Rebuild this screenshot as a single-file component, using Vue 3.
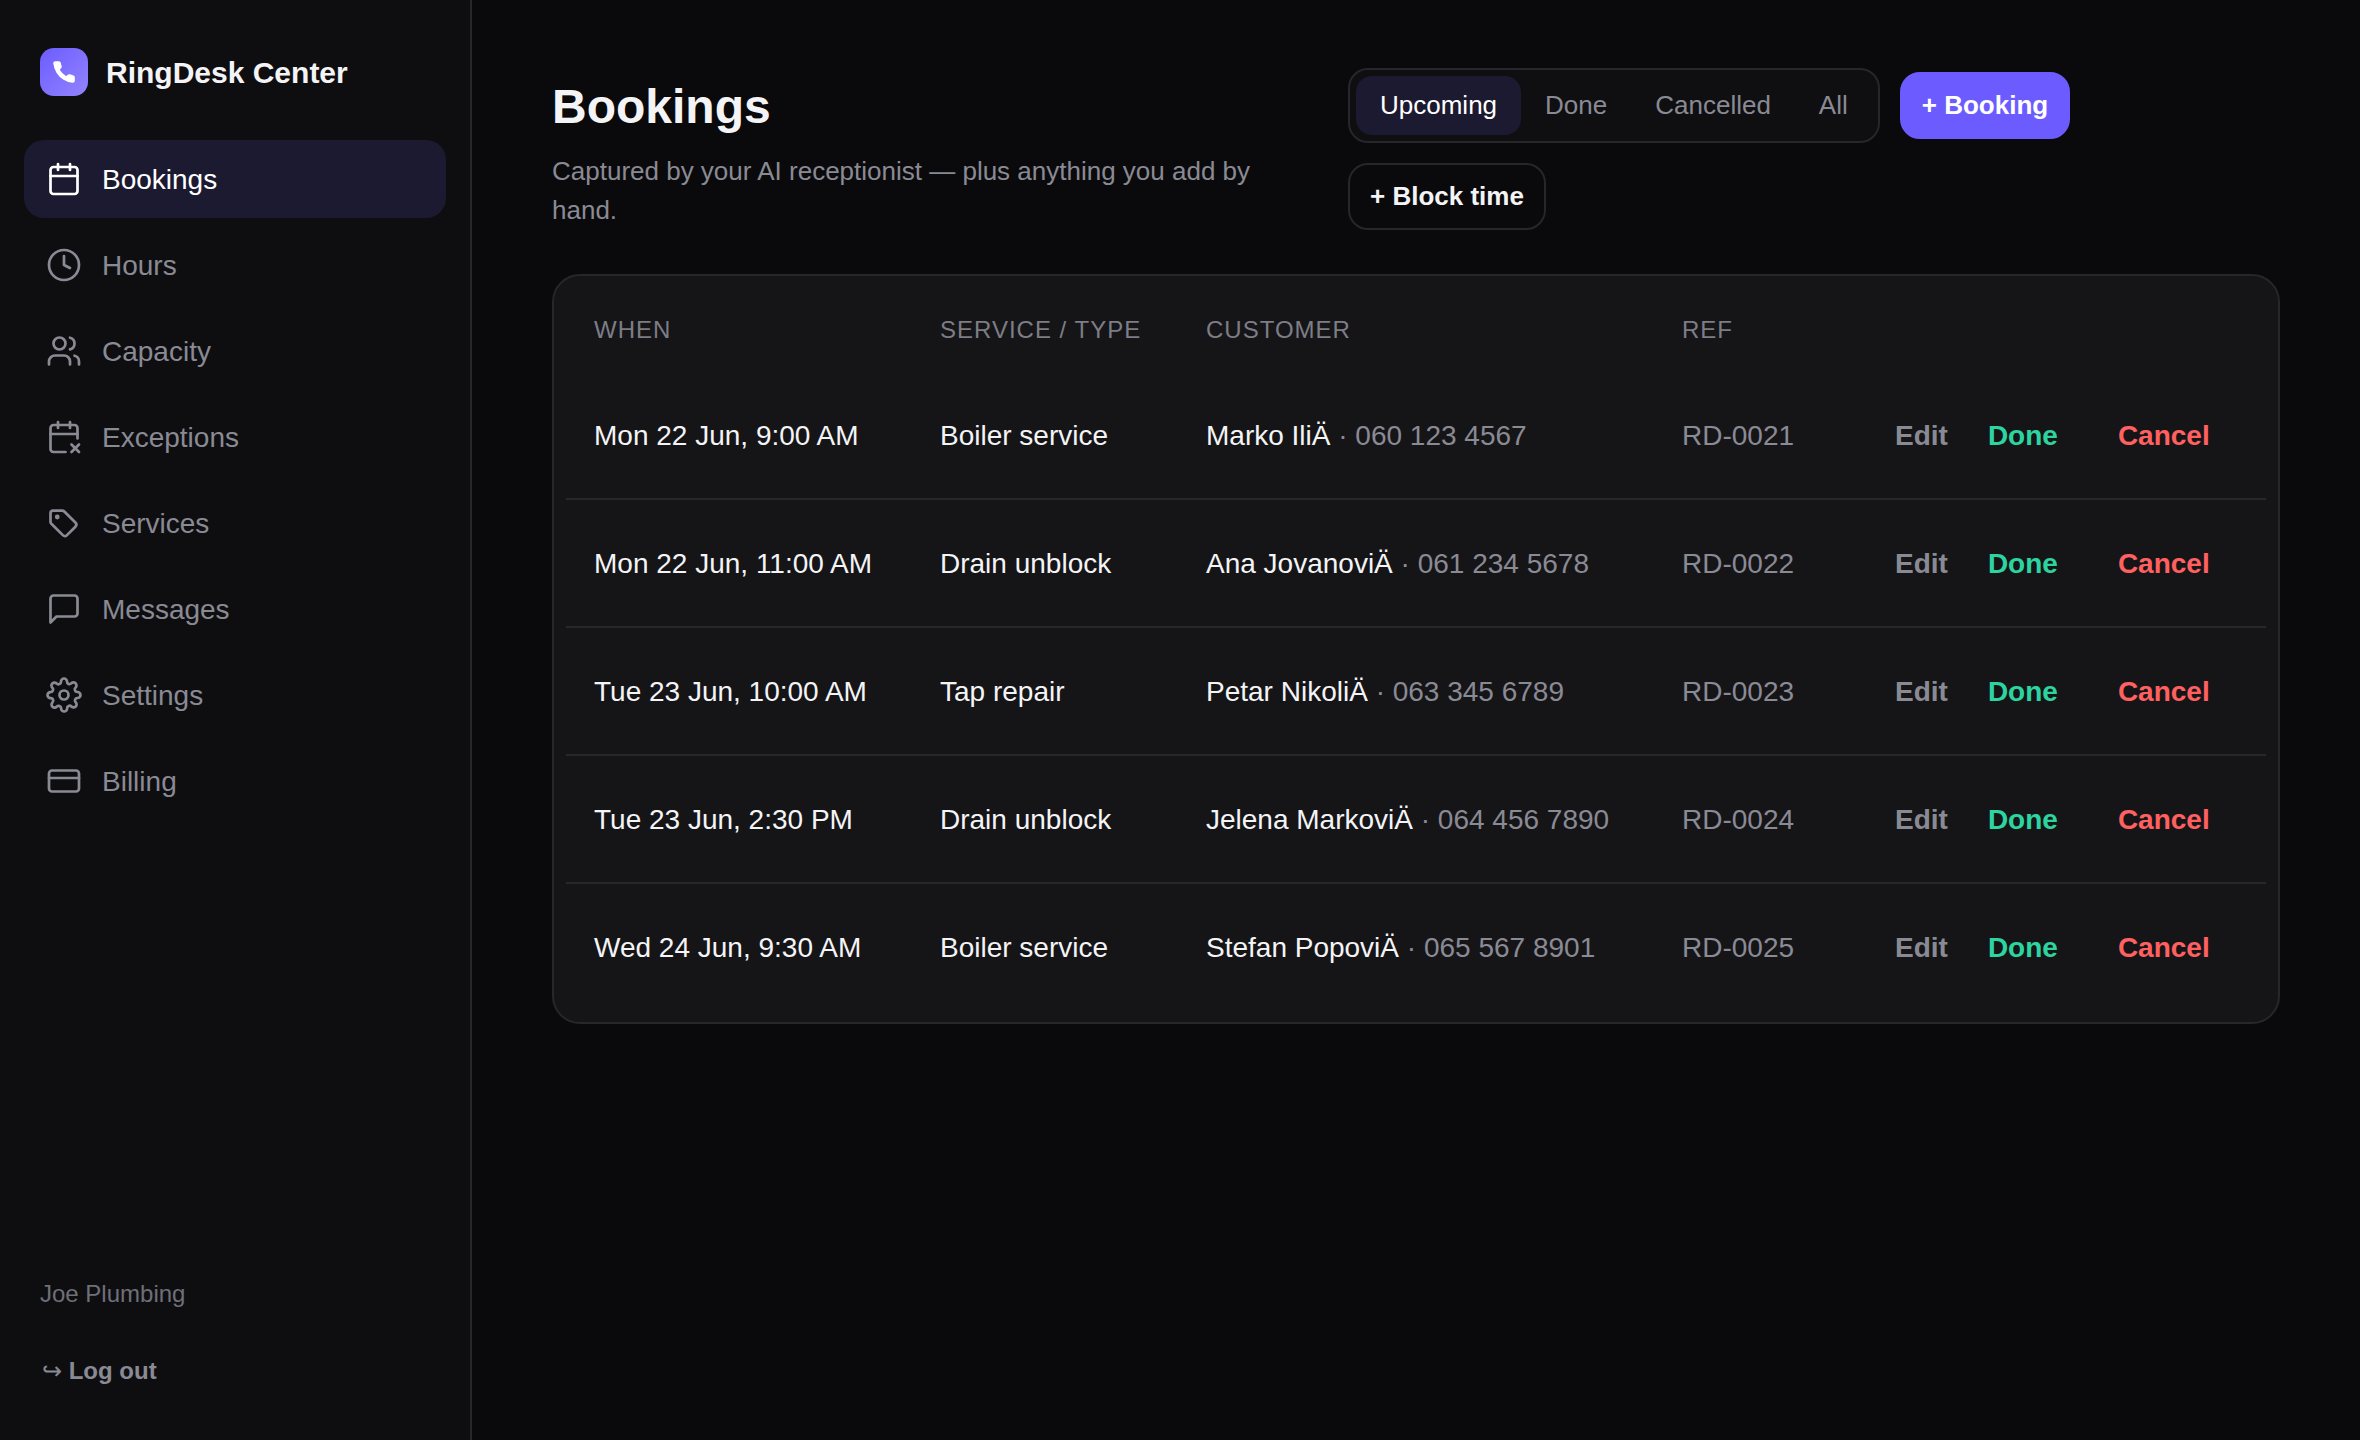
<script setup>
const navItems = [
  { label: 'Bookings', icon: 'calendar', active: true },
  { label: 'Hours', icon: 'clock' },
  { label: 'Capacity', icon: 'users' },
  { label: 'Exceptions', icon: 'calendar-x' },
  { label: 'Services', icon: 'tag' },
  { label: 'Messages', icon: 'message' },
  { label: 'Settings', icon: 'settings' },
  { label: 'Billing', icon: 'card' },
]

const tabs = ['Upcoming', 'Done', 'Cancelled', 'All']

const bookings = [
  { when: 'Mon 22 Jun, 9:00 AM', service: 'Boiler service', name: 'Marko IliÄ', phone: '060 123 4567', ref: 'RD-0021' },
  { when: 'Mon 22 Jun, 11:00 AM', service: 'Drain unblock', name: 'Ana JovanoviÄ', phone: '061 234 5678', ref: 'RD-0022' },
  { when: 'Tue 23 Jun, 10:00 AM', service: 'Tap repair', name: 'Petar NikoliÄ', phone: '063 345 6789', ref: 'RD-0023' },
  { when: 'Tue 23 Jun, 2:30 PM', service: 'Drain unblock', name: 'Jelena MarkoviÄ', phone: '064 456 7890', ref: 'RD-0024' },
  { when: 'Wed 24 Jun, 9:30 AM', service: 'Boiler service', name: 'Stefan PopoviÄ', phone: '065 567 8901', ref: 'RD-0025' },
]
</script>

<template>
  <div class="shell">
    <aside class="sidebar">
      <div class="brand">
        <span class="brand-mark">
          <svg width="26" height="26" viewBox="0 0 24 24" fill="#fff">
            <path d="M22 16.92v3a2 2 0 0 1-2.18 2 19.79 19.79 0 0 1-8.63-3.07 19.5 19.5 0 0 1-6-6 19.79 19.79 0 0 1-3.07-8.67A2 2 0 0 1 4.11 2h3a2 2 0 0 1 2 1.72 12.84 12.84 0 0 0 .7 2.81 2 2 0 0 1-.45 2.11L8.09 9.91a16 16 0 0 0 6 6l1.27-1.27a2 2 0 0 1 2.11-.45 12.84 12.84 0 0 0 2.81.7A2 2 0 0 1 22 16.92z" />
          </svg>
        </span>
        <span class="brand-name">RingDesk Center</span>
      </div>

      <nav class="nav">
        <a
          v-for="item in navItems"
          :key="item.label"
          class="nav-item"
          :class="{ active: item.active }"
        >
          <svg class="nav-icon" width="36" height="36" viewBox="0 0 24 24" fill="none" stroke="currentColor" stroke-width="1.8" stroke-linecap="round" stroke-linejoin="round">
            <template v-if="item.icon === 'calendar'">
              <path d="M8 2v4" />
              <path d="M16 2v4" />
              <rect x="3" y="4" width="18" height="18" rx="2" />
              <path d="M3 10h18" />
            </template>
            <template v-else-if="item.icon === 'clock'">
              <circle cx="12" cy="12" r="10" />
              <polyline points="12 6 12 12 16 14" />
            </template>
            <template v-else-if="item.icon === 'users'">
              <path d="M16 21v-2a4 4 0 0 0-4-4H6a4 4 0 0 0-4 4v2" />
              <circle cx="9" cy="7" r="4" />
              <path d="M22 21v-2a4 4 0 0 0-3-3.87" />
              <path d="M16 3.13a4 4 0 0 1 0 7.75" />
            </template>
            <template v-else-if="item.icon === 'calendar-x'">
              <path d="M8 2v4" />
              <path d="M16 2v4" />
              <path d="M21 13V6a2 2 0 0 0-2-2H5a2 2 0 0 0-2 2v14a2 2 0 0 0 2 2h8" />
              <path d="M3 10h18" />
              <path d="m17 17 5 5" />
              <path d="m22 17-5 5" />
            </template>
            <template v-else-if="item.icon === 'tag'">
              <path d="M3 5.5a1.8 1.8 0 0 1 1.8-1.8h6a2 2 0 0 1 1.4.6l7.4 7.4a2 2 0 0 1 0 2.8l-5.6 5.6a2 2 0 0 1-2.8 0l-7.6-7.6a2 2 0 0 1-.6-1.4z" />
              <circle cx="7.5" cy="8" r=".7" fill="currentColor" />
            </template>
            <template v-else-if="item.icon === 'message'">
              <path d="M21 15a2 2 0 0 1-2 2H7l-4 4V5a2 2 0 0 1 2-2h14a2 2 0 0 1 2 2z" />
            </template>
            <template v-else-if="item.icon === 'settings'">
              <circle cx="12" cy="12" r="3" />
              <path d="M19.4 15a1.65 1.65 0 0 0 .33 1.82l.06.06a2 2 0 0 1 0 2.83 2 2 0 0 1-2.83 0l-.06-.06a1.65 1.65 0 0 0-1.82-.33 1.65 1.65 0 0 0-1 1.51V21a2 2 0 0 1-2 2 2 2 0 0 1-2-2v-.09A1.65 1.65 0 0 0 9 19.4a1.65 1.65 0 0 0-1.82.33l-.06.06a2 2 0 0 1-2.83 0 2 2 0 0 1 0-2.83l.06-.06a1.65 1.65 0 0 0 .33-1.82 1.65 1.65 0 0 0-1.51-1H3a2 2 0 0 1-2-2 2 2 0 0 1 2-2h.09A1.65 1.65 0 0 0 4.6 9a1.65 1.65 0 0 0-.33-1.82l-.06-.06a2 2 0 0 1 0-2.83 2 2 0 0 1 2.83 0l.06.06a1.65 1.65 0 0 0 1.82.33H9a1.65 1.65 0 0 0 1-1.51V3a2 2 0 0 1 2-2 2 2 0 0 1 2 2v.09a1.65 1.65 0 0 0 1 1.51 1.65 1.65 0 0 0 1.82-.33l.06-.06a2 2 0 0 1 2.83 0 2 2 0 0 1 0 2.83l-.06.06a1.65 1.65 0 0 0-.33 1.82V9a1.65 1.65 0 0 0 1.51 1H21a2 2 0 0 1 2 2 2 2 0 0 1-2 2h-.09a1.65 1.65 0 0 0-1.51 1z" />
            </template>
            <template v-else>
              <rect x="2" y="5" width="20" height="14" rx="2" />
              <path d="M2 10h20" />
            </template>
          </svg>
          <span class="nav-label">{{ item.label }}</span>
        </a>
      </nav>

      <div class="side-foot">
        <div class="account">Joe Plumbing</div>
        <button class="logout"><span class="logout-arrow">↪</span> Log out</button>
      </div>
    </aside>

    <main class="main">
      <header class="page-head">
        <div class="page-title">
          <h1>Bookings</h1>
          <p>Captured by your AI receptionist — plus anything you add by hand.</p>
        </div>
        <div class="controls">
          <div class="tabs">
            <button
              v-for="(tab, i) in tabs"
              :key="tab"
              class="tab"
              :class="{ active: i === 0 }"
            >{{ tab }}</button>
          </div>
          <button class="btn primary">+ Booking</button>
          <button class="btn ghost">+ Block time</button>
        </div>
      </header>

      <section class="card">
        <table class="table">
          <colgroup>
            <col style="width: 346px" />
            <col style="width: 266px" />
            <col style="width: 476px" />
            <col style="width: 213px" />
            <col style="width: 399px" />
          </colgroup>
          <thead>
            <tr>
              <th>When</th>
              <th>Service / Type</th>
              <th>Customer</th>
              <th>Ref</th>
              <th></th>
            </tr>
          </thead>
          <tbody>
            <tr v-for="b in bookings" :key="b.ref">
              <td>{{ b.when }}</td>
              <td>{{ b.service }}</td>
              <td>{{ b.name }} <span class="muted">· {{ b.phone }}</span></td>
              <td class="muted">{{ b.ref }}</td>
              <td>
                <div class="actions">
                  <button class="act edit">Edit</button>
                  <button class="act done">Done</button>
                  <button class="act cancel">Cancel</button>
                </div>
              </td>
            </tr>
          </tbody>
        </table>
      </section>
    </main>
  </div>
</template>

<style scoped>
.shell {
  display: flex;
  min-height: 1440px;
  color: #f4f4f6;
  font-family: "Liberation Sans", Arial, sans-serif;
  font-size: 28px;
  line-height: 1.5;
}

button {
  font-family: inherit;
  cursor: pointer;
}

/* sidebar */
.sidebar {
  box-sizing: border-box;
  width: 472px;
  flex: none;
  display: flex;
  flex-direction: column;
  padding: 48px 24px 47px;
  background: #0e0e11;
  border-right: 2px solid #26262b;
}

.brand {
  display: flex;
  align-items: center;
  gap: 18px;
  padding-left: 16px;
  margin-bottom: 44px;
}

.brand-mark {
  width: 48px;
  height: 48px;
  border-radius: 14px;
  display: flex;
  align-items: center;
  justify-content: center;
  background: linear-gradient(135deg, #6c5cff, #9384ff);
}

.brand-name {
  font-size: 30px;
  font-weight: 700;
}

.nav {
  display: flex;
  flex-direction: column;
  gap: 8px;
}

.nav-item {
  display: flex;
  align-items: center;
  gap: 20px;
  padding: 18px 22px;
  border-radius: 20px;
  color: #8a8a94;
}

.nav-item.active {
  background: #1c1a30;
  color: #fff;
}

.nav-icon {
  flex: none;
  margin: -4px 0;
}

.nav-label {
  padding-top: 1px;
  margin-bottom: -1px;
}

.side-foot {
  margin-top: auto;
  padding-left: 16px;
  font-size: 24px;
}

.account {
  color: #6f6f78;
}

.logout {
  display: block;
  margin-top: 37px;
  padding: 4px 0 4px 2px;
  background: none;
  border: 0;
  color: #8a8a94;
  font-size: 24px;
  font-weight: 700;
  line-height: 36px;
}

.logout-arrow {
  font-weight: 400;
}

/* main */
.main {
  flex: 1;
  min-width: 0;
  box-sizing: border-box;
  padding: 68px 80px 0;
  background: #0a0a0c;
}

.page-head {
  display: flex;
  gap: 48px;
  margin-bottom: 44px;
}

.page-title {
  width: 748px;
  flex: none;
}

.page-title h1 {
  margin: 0 0 6px;
  font-size: 48px;
  font-weight: 700;
  line-height: 78px;
}

.page-title p {
  margin: 0;
  color: #8a8a94;
  font-size: 26px;
  line-height: 39px;
}

.controls {
  flex: 1;
  display: flex;
  flex-wrap: wrap;
  align-items: center;
  align-content: flex-start;
  gap: 20px;
}

.tabs {
  display: flex;
  padding: 6px;
  background: #0f0f12;
  border: 2px solid #26262b;
  border-radius: 20px;
}

.tab {
  padding: 10px 24px;
  background: none;
  border: 0;
  border-radius: 16px;
  color: #8a8a94;
  font-size: 26px;
  line-height: 39px;
}

.tab.active {
  background: #1c1a30;
  color: #fff;
}

.btn {
  padding: 12px 20px;
  border-radius: 20px;
  font-size: 26px;
  font-weight: 700;
  line-height: 39px;
}

.btn.primary {
  background: #6c5cff;
  border: 2px solid #6c5cff;
  color: #fff;
}

.btn.ghost {
  background: transparent;
  border: 2px solid #26262b;
  color: #f4f4f6;
}

.card {
  padding: 12px;
  background: #151518;
  border: 2px solid #26262b;
  border-radius: 28px;
}

.table {
  width: 100%;
  table-layout: fixed;
  border-collapse: collapse;
}

.table th {
  height: 84px;
  padding: 0 28px;
  box-sizing: border-box;
  color: #7d7d86;
  font-size: 24px;
  font-weight: 400;
  letter-spacing: 1px;
  text-align: left;
  text-transform: uppercase;
}

.table td {
  height: 124px;
  padding: 2px 28px 0;
  white-space: nowrap;
}

.table tbody tr + tr td {
  border-top: 2px solid #26262b;
}

.muted {
  color: #8a8a94;
}

.actions {
  display: flex;
  gap: 40px;
}

.act {
  padding: 0;
  background: none;
  border: 0;
  font-size: 28px;
  font-weight: 700;
  line-height: 42px;
}

.act.edit {
  color: #8a8a94;
}

.act.done {
  color: #2dd4a0;
}

.act.cancel {
  margin-left: 20px;
  color: #ff6060;
}
</style>

<style>
body {
  background: #0a0a0c;
}
</style>
